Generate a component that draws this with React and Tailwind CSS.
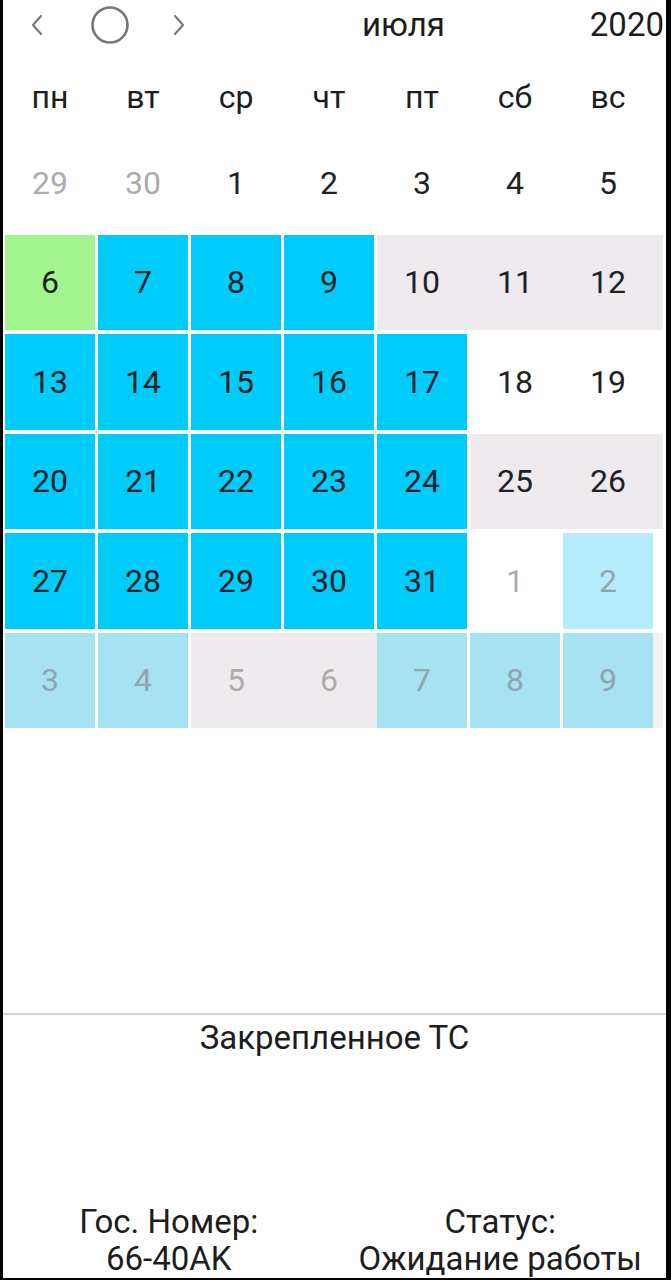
import React from 'react';

const BLUE = 'bg-[#00ccfb]';
const LIGHT = 'bg-[#a7e2f3]';

// [label, cellColor, columnBg, muted]
const weeks = [
  [['29', '', '', 1], ['30', '', '', 1], ['1'], ['2'], ['3'], ['4'], ['5']],
  [['6', 'bg-[#a2f48e]'], ['7', BLUE], ['8', BLUE], ['9', BLUE], ['10', '', 'g'], ['11', '', 'g'], ['12', '', 'g']],
  [['13', BLUE], ['14', BLUE], ['15', BLUE], ['16', BLUE], ['17', BLUE], ['18'], ['19']],
  [['20', BLUE], ['21', BLUE], ['22', BLUE], ['23', BLUE], ['24', BLUE], ['25', '', 'g'], ['26', '', 'g']],
  [['27', BLUE], ['28', BLUE], ['29', BLUE], ['30', BLUE], ['31', BLUE], ['1', '', '', 1], ['2', 'bg-[#b3ecfa]', '', 1]],
  [['3', LIGHT, '', 1], ['4', LIGHT, '', 1], ['5', '', 'g', 1], ['6', '', 'g', 1], ['7', LIGHT, '', 1], ['8', LIGHT, '', 1], ['9', LIGHT, 'g2', 1]],
];

const days = ['пн', 'вт', 'ср', 'чт', 'пт', 'сб', 'вс'];

const Cell = ({ label, color, colBg, muted }) => (
  <div className={colBg === 'g' ? 'bg-[#eeeaed]' : colBg === 'g2' ? 'bg-[#f3f1f3]' : ''}>
    <div className={`w-[90px] h-full flex items-center justify-center text-[32px] ${color || ''} ${muted ? (color ? 'text-[#8fa6ad]' : 'text-[#acacac]') : 'text-[#1c2226]'}`}>
      {label}
    </div>
  </div>
);

export default function App() {
  return (
    <div className="w-[671px] h-[1280px] bg-black pl-[3px] pr-[5px] pb-[2px] overflow-hidden" style={{ fontFamily: 'Roboto, "Noto Sans", sans-serif' }}>
      <div className="h-full bg-white flex flex-col">
        {/* header */}
        <div className="h-[50px] flex items-center text-[33px] text-[#1d1d1d]">
          <div className="flex items-center">
            <svg width="18" height="24" viewBox="0 0 18 24" className="ml-[25px]">
              <path d="M13 3 L5 12 L13 21" fill="none" stroke="#7a7a7a" strokeWidth="2.2" strokeLinecap="round" strokeLinejoin="round" />
            </svg>
            <svg width="40" height="40" viewBox="0 0 40 40" className="ml-[44px]">
              <circle cx="20" cy="20" r="17.5" fill="none" stroke="#777" strokeWidth="2.6" />
            </svg>
            <svg width="18" height="24" viewBox="0 0 18 24" className="ml-[40px]">
              <path d="M5 3 L13 12 L5 21" fill="none" stroke="#7a7a7a" strokeWidth="2.2" strokeLinecap="round" strokeLinejoin="round" />
            </svg>
          </div>
          <span className="ml-[174px]">июля</span>
          <span className="ml-auto pr-[2px]">2020</span>
        </div>

        {/* weekday names */}
        <div className="mt-[22px] h-[50px] pl-[2px] grid grid-cols-[repeat(7,93px)] text-[32px] text-[#1d1d1d]">
          {days.map(d => (
            <div key={d} className="w-[90px] flex items-center justify-center">{d}</div>
          ))}
        </div>

        {/* weeks */}
        <div className="mt-[13px] pl-[2px] flex flex-col gap-[4px]">
          {weeks.map((w, i) => (
            <div key={i} className="h-[95.5px] grid grid-cols-[repeat(6,93px)_1fr] mr-[3px]">
              {w.map(([label, color, colBg, muted], j) => (
                <Cell key={j} label={label} color={color} colBg={colBg} muted={muted} />
              ))}
            </div>
          ))}
        </div>

        <div className="flex-1" />

        {/* pinned vehicle */}
        <div className="border-t-2 border-[#d6d6d6] h-[265px] flex flex-col text-[#1d1d1d] text-[33px]">
          <div className="text-center leading-[38px] mt-[4px]">Закрепленное ТС</div>
          <div className="flex-1" />
          <div className="grid grid-cols-2 text-center leading-[37px] pb-[1px]">
            <div>
              <div>Гос. Номер:</div>
              <div>66-40AK</div>
            </div>
            <div>
              <div>Статус:</div>
              <div>Ожидание работы</div>
            </div>
          </div>
        </div>
      </div>
    </div>
  );
}
